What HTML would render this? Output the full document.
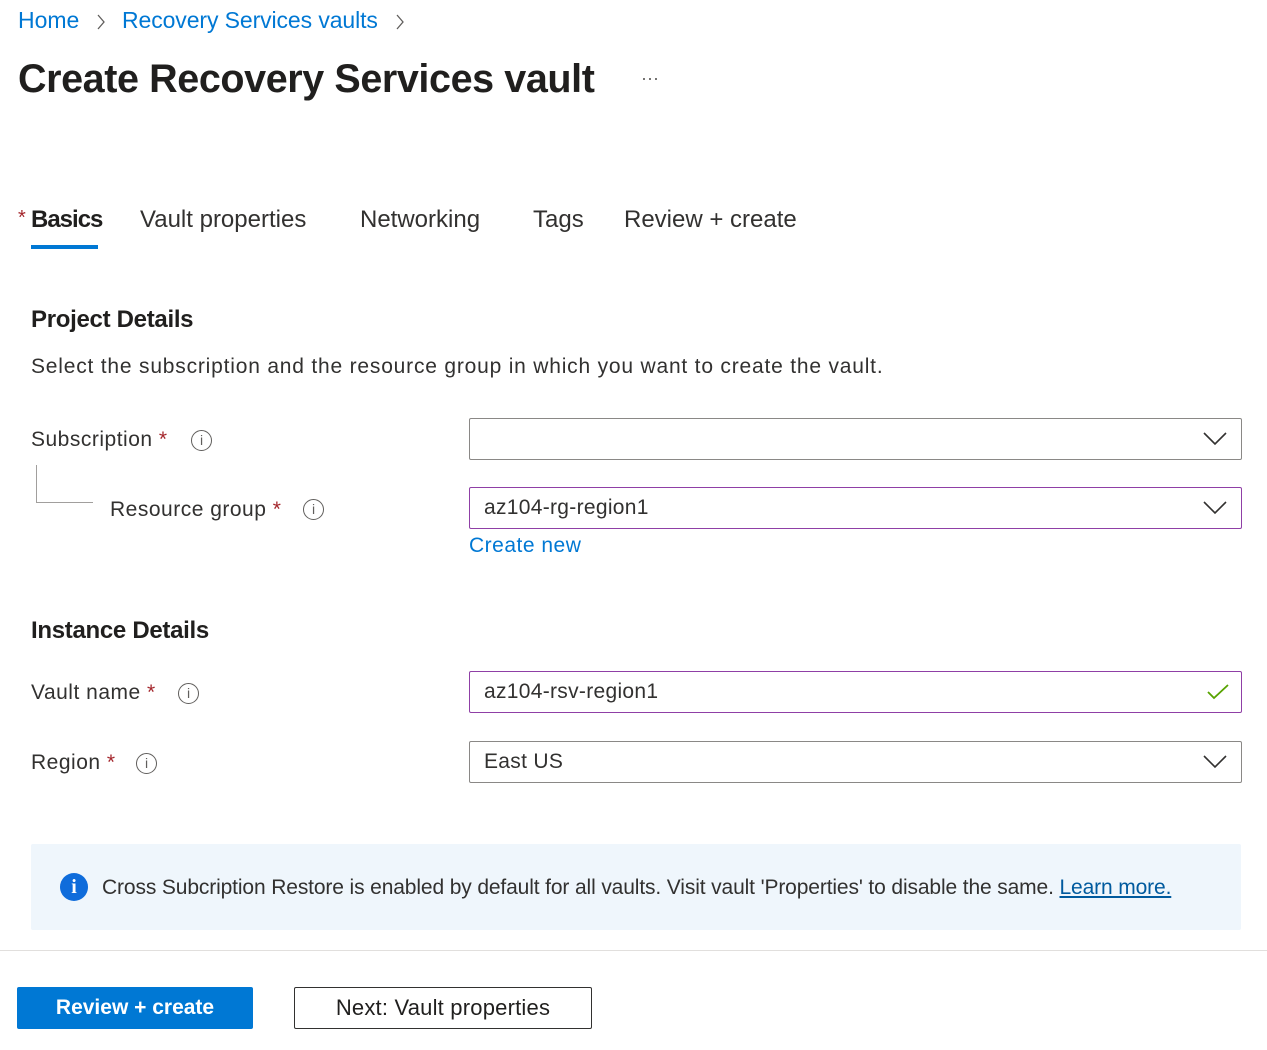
<!DOCTYPE html>
<html><head><meta charset="utf-8"><style>
*{margin:0;padding:0;box-sizing:border-box}
body{width:1267px;height:1050px;background:#fff;font-family:"Liberation Sans",sans-serif;color:#323130;position:relative;overflow:hidden}
.a{position:absolute;white-space:nowrap}
.link{color:#0078d4}
.t{font-size:21px;letter-spacing:0.5px}
.req{color:#a4262c}
.info{position:absolute;width:21px;height:21px;border:1.3px solid #605e5c;border-radius:50%;font-size:14px;text-align:center;line-height:19px;color:#605e5c;font-family:"Liberation Sans",sans-serif}
.box{position:absolute;left:469px;width:773px;height:42px;border:1px solid #8a8886;border-radius:2px;font-size:21px;padding-left:14px;line-height:40px;letter-spacing:0.3px}
.chev{position:absolute;right:14px;top:13px}
.tab{font-size:24px;top:206px;letter-spacing:0px}
.h{font-size:24px;font-weight:bold;color:#201f1e;letter-spacing:-0.3px}
</style></head><body>
<div class="a link" style="left:18px;top:7px;font-size:23px">Home</div>
<svg class="a" style="left:96px;top:13px" width="10" height="18"><path d="M2 2l6 7-6 7" stroke="#605e5c" fill="none" stroke-width="1.3"/></svg>
<div class="a link" style="left:122px;top:7px;font-size:23px;letter-spacing:-0.1px">Recovery Services vaults</div>
<svg class="a" style="left:395px;top:13px" width="10" height="18"><path d="M2 2l6 7-6 7" stroke="#605e5c" fill="none" stroke-width="1.3"/></svg>
<div class="a" style="left:18px;top:57px;font-size:39.5px;font-weight:bold;color:#201f1e;letter-spacing:-0.4px">Create Recovery Services vault</div>
<div class="a" style="left:641px;top:68px;font-size:18px;color:#605e5c">···</div>

<div class="a" style="left:18px;top:207px;font-size:20px;color:#a4262c">*</div>
<div class="a" style="left:31px;top:206px;font-size:24px;font-weight:bold;color:#201f1e;letter-spacing:-1px">Basics</div>
<div class="a" style="left:31px;top:245px;width:67px;height:4px;background:#0078d4"></div>
<div class="a tab" style="left:140px">Vault properties</div>
<div class="a tab" style="left:360px">Networking</div>
<div class="a tab" style="left:533px">Tags</div>
<div class="a tab" style="left:624px">Review + create</div>

<div class="a h" style="left:31px;top:306px">Project Details</div>
<div class="a t" style="left:31px;top:355px;letter-spacing:0.8px">Select the subscription and the resource group in which you want to create the vault.</div>

<div class="a t" style="left:31px;top:428px">Subscription <span class="req">*</span></div>
<div class="info" style="left:191px;top:430px">i</div>
<div class="box" style="top:418px"><svg class="chev" width="24" height="14"><path d="M1 1l11 11 11-11" stroke="#323130" fill="none" stroke-width="1.6"/></svg></div>
<div class="a" style="left:36px;top:465px;width:57px;height:38px;border-left:1px solid #a19f9d;border-bottom:1px solid #a19f9d"></div>
<div class="a t" style="left:110px;top:498px">Resource group <span class="req">*</span></div>
<div class="info" style="left:303px;top:499px">i</div>
<div class="box" style="top:487px;border-color:#8f3fa6">az104-rg-region1<svg class="chev" width="24" height="14"><path d="M1 1l11 11 11-11" stroke="#323130" fill="none" stroke-width="1.6"/></svg></div>
<div class="a link t" style="left:469px;top:534px">Create new</div>

<div class="a h" style="left:31px;top:617px">Instance Details</div>
<div class="a t" style="left:31px;top:681px">Vault name <span class="req">*</span></div>
<div class="info" style="left:178px;top:683px">i</div>
<div class="box" style="top:671px;border-color:#8f3fa6">az104-rsv-region1<svg class="a" style="right:12px;top:11px" width="22" height="18"><path d="M1 9l6 6L21 2" stroke="#57a300" fill="none" stroke-width="1.8"/></svg></div>
<div class="a t" style="left:31px;top:751px">Region <span class="req">*</span></div>
<div class="info" style="left:136px;top:753px">i</div>
<div class="box" style="top:741px">East US<svg class="chev" width="24" height="14"><path d="M1 1l11 11 11-11" stroke="#323130" fill="none" stroke-width="1.6"/></svg></div>

<div class="a" style="left:31px;top:844px;width:1210px;height:86px;background:#eff6fc;border-radius:2px"></div>
<div class="a" style="left:60px;top:873px;width:28px;height:28px;border-radius:50%;background:#0f6cdb;color:#fff;text-align:center;font-weight:bold;font-size:20px;line-height:28px;font-family:'Liberation Serif',serif">i</div>
<div class="a" style="left:102px;top:876px;font-size:21px;letter-spacing:-0.13px">Cross Subcription Restore is enabled by default for all vaults. Visit vault 'Properties' to disable the same. <span style="color:#005a9e;text-decoration:underline">Learn more.</span></div>

<div class="a" style="left:0;top:950px;width:1267px;height:1px;background:#e1dfdd"></div>
<div class="a" style="left:17px;top:987px;width:236px;height:42px;background:#0078d4;border-radius:2px;color:#fff;font-weight:bold;font-size:21px;text-align:center;line-height:42px">Review + create</div>
<div class="a" style="left:294px;top:987px;width:298px;height:42px;border:1px solid #323130;border-radius:2px;font-size:22px;text-align:center;line-height:40px;color:#201f1e;letter-spacing:0.2px">Next: Vault properties</div>
</body></html>
